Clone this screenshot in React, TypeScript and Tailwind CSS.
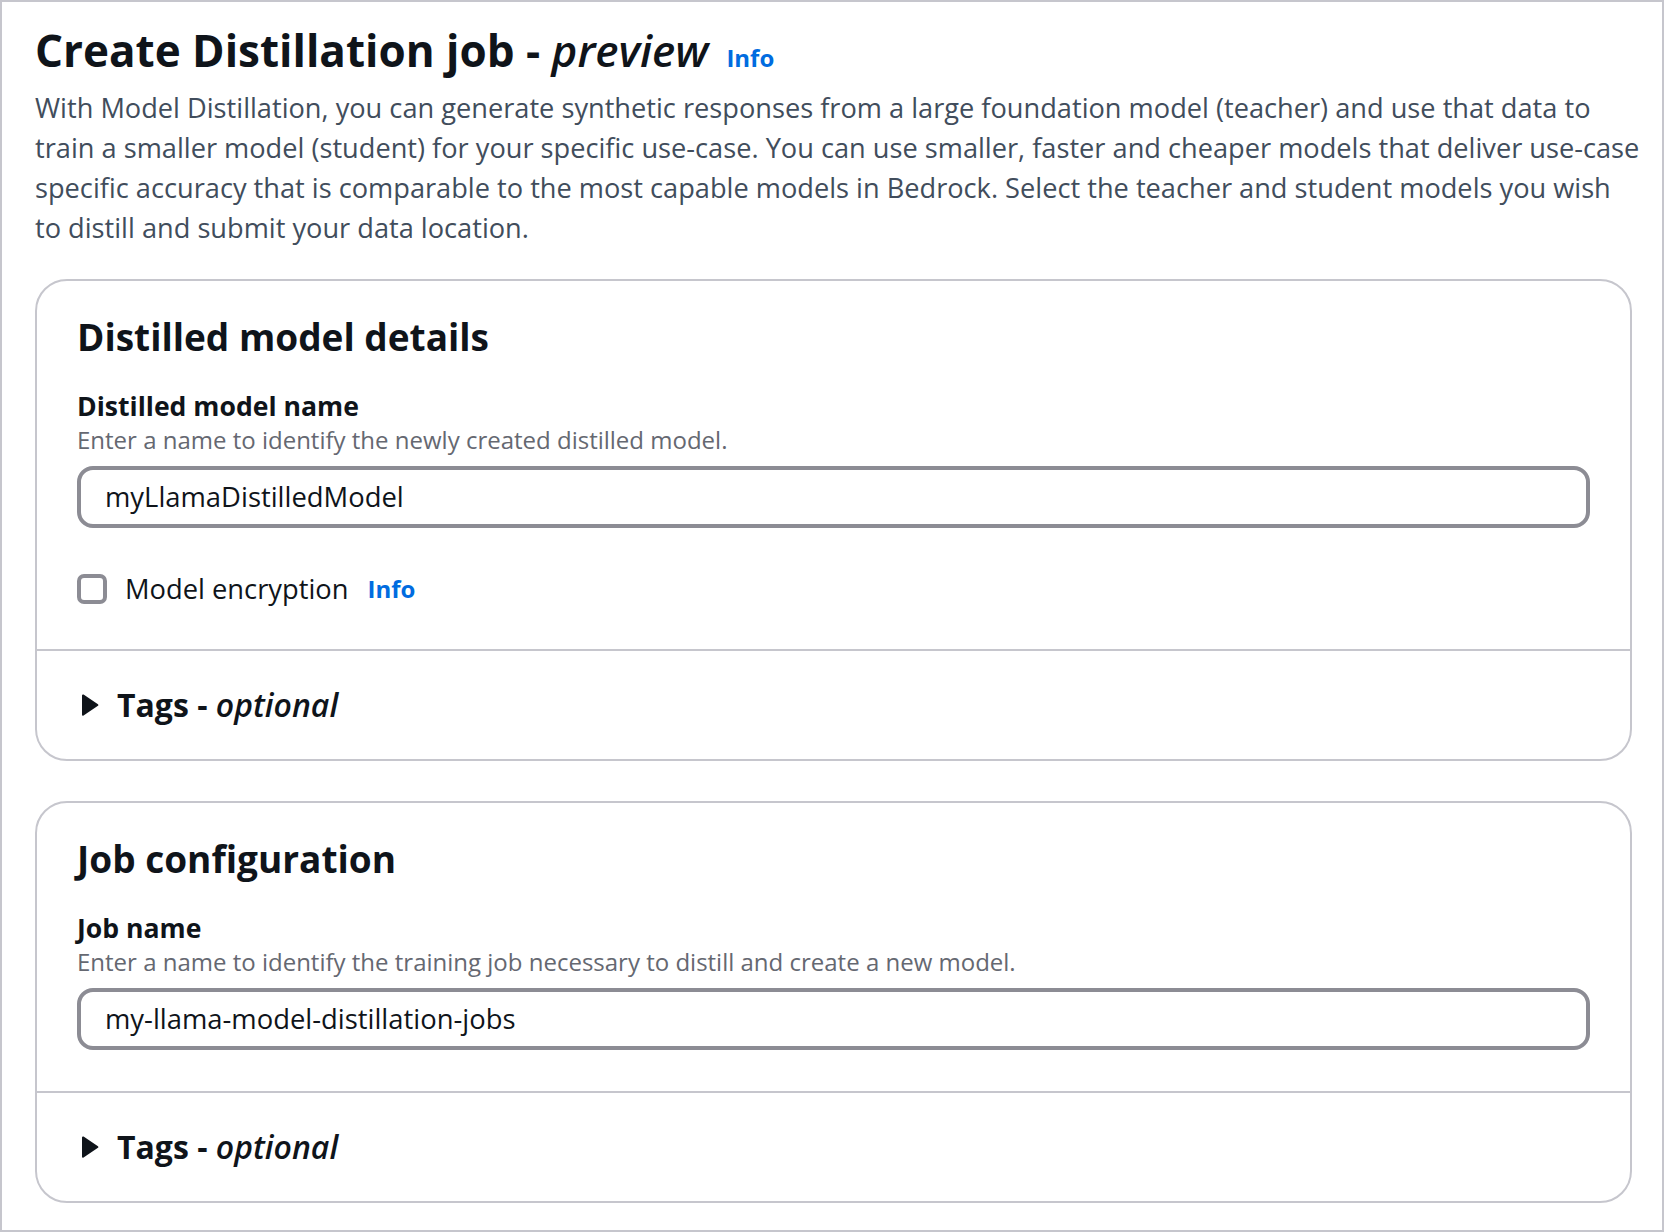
import React from 'react'

function Caret() {
  return (
    <svg viewBox="0 0 16 16" className="w-[32px] h-[32px] shrink-0 text-[#0f141a]" aria-hidden>
      <path d="M3 3.2 L10.2 8 L3 12.8 Z" fill="currentColor" stroke="currentColor" strokeWidth="1" strokeLinejoin="round" />
    </svg>
  )
}

function InfoLink({ className = '' }: { className?: string }) {
  return <a className={`text-[24px] font-bold text-[#006ce0] leading-[32px] ${className}`}>Info</a>
}

function TagsSection({ className = '' }: { className?: string }) {
  return (
    <div className={`border-t-2 border-[#c6c6cd] px-[40px] ${className}`}>
      <div className="flex items-center gap-[8px] h-[40px]">
        <Caret />
        <span className="text-[32px] leading-[40px] font-bold text-[#0f141a]">
          Tags - <i className="font-semibold">optional</i>
        </span>
      </div>
    </div>
  )
}

function Field({ label, description, value }: { label: string; description: string; value: string }) {
  return (
    <div>
      <div className="text-[26.6px] leading-[36px] font-bold text-[#0f141a]">{label}</div>
      <div className="text-[24px] leading-[32px] text-[#656871]">{description}</div>
      <div className="mt-[10px] h-[62px] rounded-[16px] border-4 border-[#8c8c94] px-[24px] flex items-center">
        <span className="text-[27.4px] text-[#0f141a]">{value}</span>
      </div>
    </div>
  )
}

export default function App() {
  const intro = [
    'With Model Distillation, you can generate synthetic responses from a large foundation model (teacher) and use that data to',
    'train a smaller model (student) for your specific use-case. You can use smaller, faster and cheaper models that deliver use-case',
    'specific accuracy that is comparable to the most capable models in Bedrock. Select the teacher and student models you wish',
    'to distill and submit your data location.',
  ]

  return (
    <div className="w-[1664px] h-[1232px] bg-white border-2 border-[#c6c6cd] pl-[33px] pr-[30px] pt-[18px] font-['Open_Sans',sans-serif]">
      {/* Page header */}
      <div className="flex items-baseline">
        <h1 className="text-[44px] leading-[60px] font-bold text-[#0f141a] whitespace-nowrap">
          Create Distillation job - <i className="font-semibold">preview</i>
        </h1>
        <InfoLink className="ml-[18px]" />
      </div>
      <p className="mt-[8px] text-[27.2px] leading-[40px] text-[#414d5c]">
        {intro.map((line) => (
          <span key={line} className="block whitespace-nowrap">{line}</span>
        ))}
      </p>

      {/* Distilled model details */}
      <section className="mt-[31px] rounded-[32px] border-2 border-[#c6c6cd]">
        <div className="px-[40px] pt-[36px] pb-[40px]">
          <h2 className="text-[37px] leading-[40px] font-bold text-[#0f141a]">Distilled model details</h2>
          <div className="mt-[31px]">
            <Field
              label="Distilled model name"
              description="Enter a name to identify the newly created distilled model."
              value="myLlamaDistilledModel"
            />
          </div>
          <div className="mt-[41px] h-[40px] flex items-center">
            <span className="w-[30px] h-[30px] rounded-[7px] border-4 border-[#8c8c94]" />
            <span className="ml-[18px] text-[27.3px] text-[#0f141a]">Model encryption</span>
            <InfoLink className="ml-[19px]" />
          </div>
        </div>
        <TagsSection className="py-[34px]" />
      </section>

      {/* Job configuration */}
      <section className="mt-[40px] rounded-[32px] border-2 border-[#c6c6cd]">
        <div className="px-[40px] pt-[36px] pb-[41px]">
          <h2 className="text-[37px] leading-[40px] font-bold text-[#0f141a]">Job configuration</h2>
          <div className="mt-[31px]">
            <Field
              label="Job name"
              description="Enter a name to identify the training job necessary to distill and create a new model."
              value="my-llama-model-distillation-jobs"
            />
          </div>
        </div>
        <TagsSection className="py-[34px]" />
      </section>
    </div>
  )
}
